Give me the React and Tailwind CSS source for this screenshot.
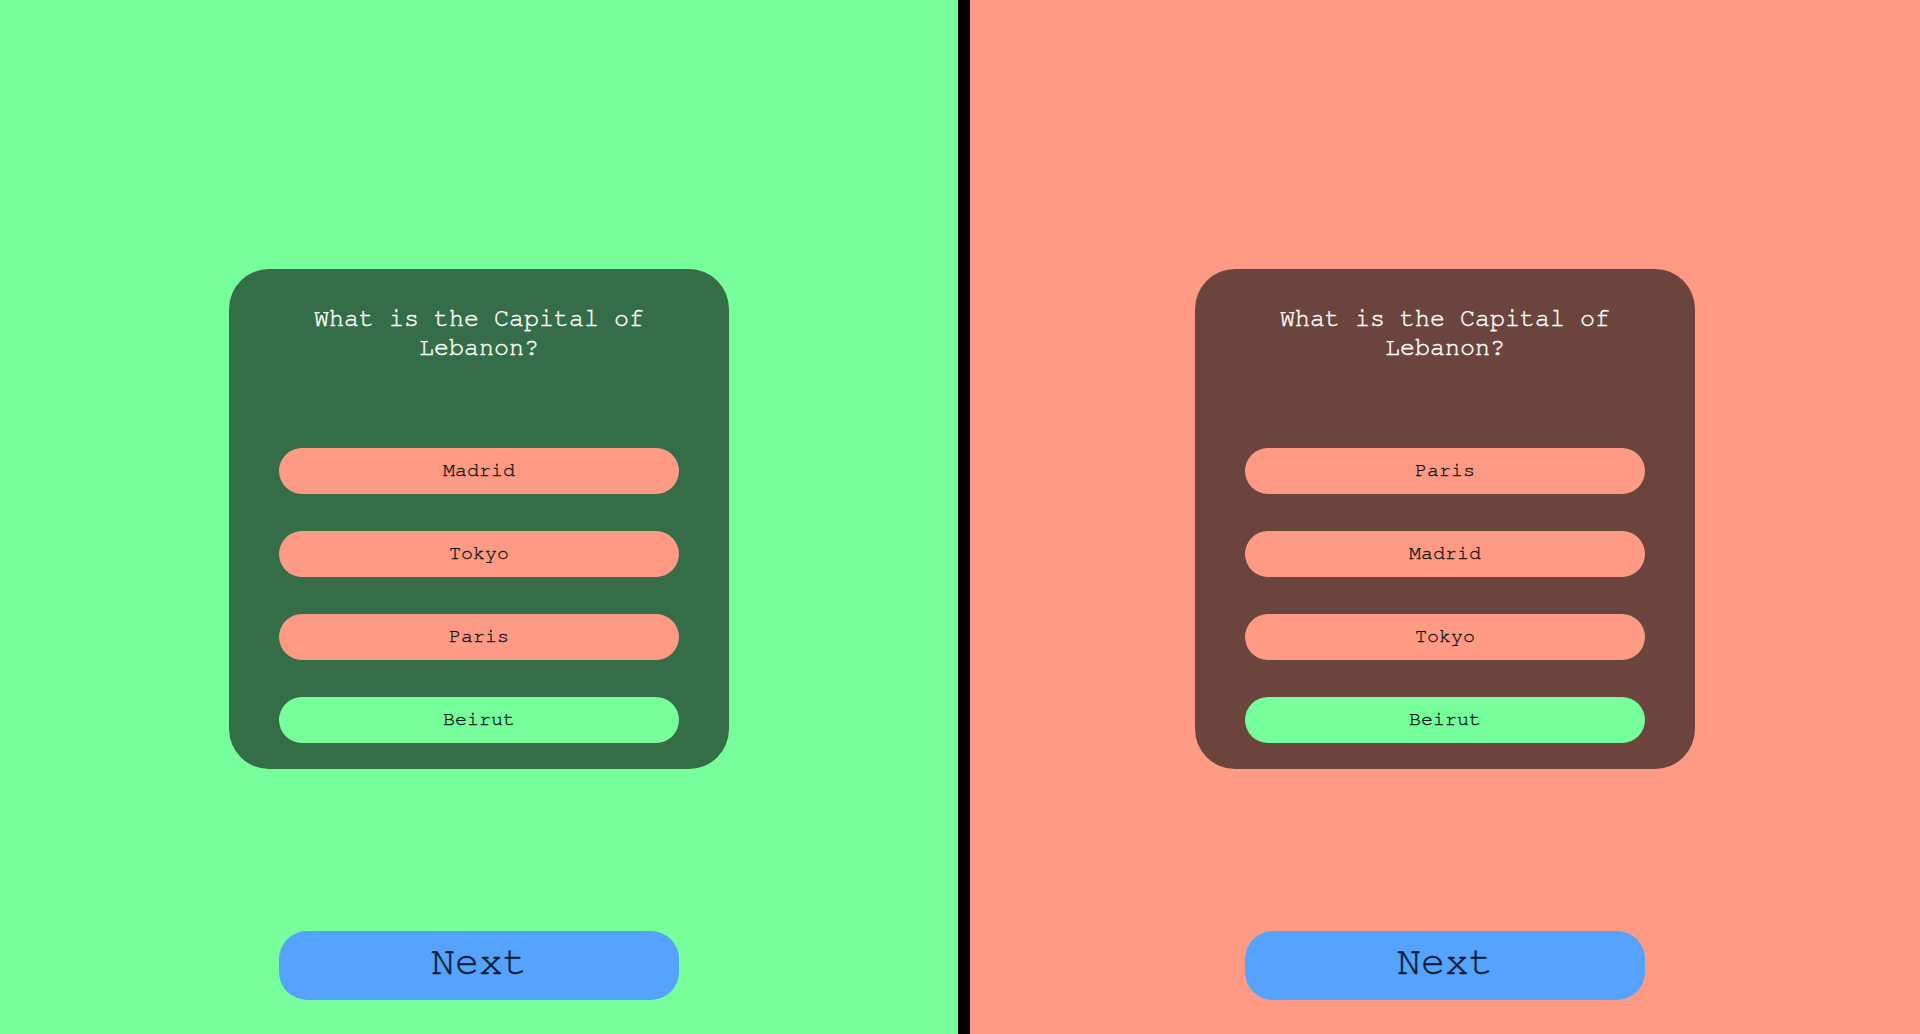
const question = 'What is the Capital of Lebanon?';

function QuizPanel({ bg, cardBg, options, width }) {
  return (
    <div className={`flex flex-col items-center h-full ${bg} ${width}`}>
      <div className={`mt-[269px] w-[500px] h-[500px] rounded-[40px] ${cardBg} px-[50px] pt-[35px] flex flex-col`}>
        <h2 className="text-center text-white text-[25px] leading-[29px] font-normal [-webkit-text-stroke:0.4px]">{question}</h2>
        <div className="mt-[86px] flex flex-col gap-[37px]">
          {options.map((opt) => (
            <button
              key={opt.label}
              className={`h-[46px] w-full rounded-[23px] pb-[2px] text-[20px] text-[#111] [-webkit-text-stroke:0.3px] ${opt.correct ? 'bg-[#76ff9b]' : 'bg-[#ff9b85]'}`}
            >
              {opt.label}
            </button>
          ))}
        </div>
      </div>
      <button className="mt-[162px] w-[400px] h-[69px] rounded-[28px] pb-[7px] bg-[#55a2ff] text-[#0b1a33] text-[40px] [-webkit-text-stroke:0.4px]">
        Next
      </button>
    </div>
  );
}

export default function App() {
  return (
    <div className="flex w-[1920px] h-[1034px] overflow-hidden font-['FreeMono','Liberation_Mono',monospace]">
      <QuizPanel
        bg="bg-[#76ff9b]"
        cardBg="bg-[#346d47]"
        width="w-[958px]"
        options={[
          { label: 'Madrid' },
          { label: 'Tokyo' },
          { label: 'Paris' },
          { label: 'Beirut', correct: true },
        ]}
      />
      <div className="w-[12px] h-full bg-black" />
      <QuizPanel
        bg="bg-[#ff9b85]"
        cardBg="bg-[#6b453d]"
        width="flex-1"
        options={[
          { label: 'Paris' },
          { label: 'Madrid' },
          { label: 'Tokyo' },
          { label: 'Beirut', correct: true },
        ]}
      />
    </div>
  );
}
